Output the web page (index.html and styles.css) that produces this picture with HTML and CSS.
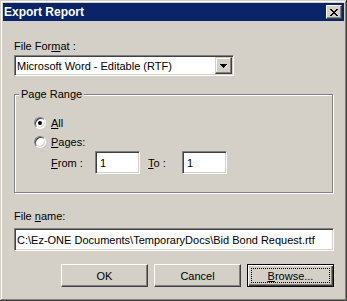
FILE: index.html
```html
<!DOCTYPE html>
<html lang="en">
<head>
    <meta charset="UTF-8">
    <title>Export Report</title>
    <link rel="stylesheet" href="styles.css">
</head>
<body>
    <div class="window">
        <div class="titlebar">
            <span class="title">Export Report</span>
            <button class="close-btn" type="button">
                <svg width="8" height="7" viewBox="0 0 8 7" shape-rendering="crispEdges">
                    <path d="M0 0h2v1H0zM6 0h2v1H6zM1 1h2v1H1zM5 1h2v1H5zM2 2h4v1H2zM3 3h2v1H3zM2 4h4v1H2zM1 5h2v1H1zM5 5h2v1H5zM0 6h2v1H0zM6 6h2v1H6z" fill="#000"/>
                </svg>
            </button>
        </div>
        <div class="dialog-body">
            <label class="label label-format">File For<u>m</u>at :</label>
            <div class="combo">
                <span class="combo-text">Microsoft Word - Editable (RTF)</span>
                <span class="combo-btn">
                    <svg width="7" height="4" viewBox="0 0 7 4" shape-rendering="crispEdges">
                        <path d="M0 0h7v1H0zM1 1h5v1H1zM2 2h3v1H2zM3 3h1v1H3z" fill="#000"/>
                    </svg>
                </span>
            </div>
            <fieldset class="group">
                <legend>Page Range</legend>
                <div class="option"><span class="radio checked"></span><span><u>A</u>ll</span></div>
                <div class="option"><span class="radio"></span><span><u>P</u>ages:</span></div>
                <div class="range">
                    <span class="range-label from-label"><u>F</u>rom :</span>
                    <div class="field field-small">1</div>
                    <span class="range-label to-label"><u>T</u>o :</span>
                    <div class="field field-small">1</div>
                </div>
            </fieldset>
            <label class="label label-name">File <u>n</u>ame:</label>
            <div class="field field-path">C:\Ez-ONE Documents\TemporaryDocs\Bid Bond Request.rtf</div>
            <div class="actions">
                <button class="btn" type="button">OK</button>
                <button class="btn" type="button">Cancel</button>
                <button class="btn btn-default" type="button"><span class="focus"><u>B</u>rowse...</span></button>
            </div>
        </div>
    </div>
</body>
</html>
```

FILE: styles.css
```css
* {
    box-sizing: border-box;
}
body {
    margin: 0;
    background-color: #d4d0c8;
    font-family: "Liberation Sans", Arial, sans-serif;
    font-size: 11px;
    color: #000;
}
.window {
    width: 347px;
    height: 301px;
    padding: 3px;
    background-color: #d4d0c8;
    box-shadow: inset -1px -1px #404040, inset 1px 1px #d4d0c8, inset -2px -2px #808080, inset 2px 2px #fff;
}
.titlebar {
    height: 18px;
    display: flex;
    align-items: center;
    justify-content: space-between;
    padding: 0 2px 0 1px;
    background-color: #0a246a;
    color: #fff;
}
.title {
    font-weight: bold;
    font-size: 12px;
}
.close-btn {
    width: 16px;
    height: 14px;
    padding: 0;
    display: flex;
    align-items: center;
    justify-content: center;
    background-color: #d4d0c8;
    border: 1px solid;
    border-color: #fff #404040 #404040 #fff;
    box-shadow: inset -1px -1px #808080, inset 1px 1px #d4d0c8;
}
.dialog-body {
    padding: 19px 10px 0 11px;
}
.label {
    display: block;
    line-height: 13px;
}
.label-format {
    margin-bottom: 2px;
}
.label-name {
    margin: 17px 0 5px;
}
.combo {
    width: 220px;
    height: 21px;
    display: flex;
    align-items: center;
    padding: 1px;
    background-color: #fff;
    border: 1px solid;
    border-color: #808080 #fff #fff #808080;
    box-shadow: inset 1px 1px #404040, inset -1px -1px #d4d0c8;
}
.combo-text {
    flex: 1;
    padding-left: 1px;
}
.combo-btn {
    width: 17px;
    height: 17px;
    display: flex;
    align-items: center;
    justify-content: center;
    background-color: #d4d0c8;
    border: 1px solid;
    border-color: #d4d0c8 #404040 #404040 #d4d0c8;
    box-shadow: inset -1px -1px #808080, inset 1px 1px #fff;
}
.group {
    width: 319px;
    margin: 12px 0 0;
    padding: 12px 0 18px;
    border: 1px solid #808080;
    box-shadow: 1px 1px #fff, inset 1px 1px #fff;
}
.group legend {
    margin-left: 4px;
    padding: 0 2px;
    line-height: 13px;
    background-color: #d4d0c8;
}
.option {
    height: 19px;
    display: flex;
    align-items: center;
    gap: 5px;
    padding-left: 19px;
}
.radio {
    position: relative;
    width: 12px;
    height: 12px;
    border-radius: 50%;
    background-color: #fff;
    border: 1px solid;
    border-color: #808080 #fff #fff #808080;
    box-shadow: inset 1px 1px #404040, inset -1px -1px #d4d0c8;
}
.radio.checked::after {
    content: "";
    position: absolute;
    left: 3px;
    top: 3px;
    width: 4px;
    height: 4px;
    border-radius: 50%;
    background-color: #000;
}
.range {
    display: flex;
    align-items: center;
    padding-left: 36px;
}
.from-label {
    width: 44px;
}
.to-label {
    width: 34px;
    margin-left: 8px;
}
.field {
    height: 23px;
    display: flex;
    align-items: center;
    padding: 0 2px;
    background-color: #fff;
    border: 1px solid;
    border-color: #808080 #fff #fff #808080;
    box-shadow: inset 1px 1px #404040, inset -1px -1px #d4d0c8;
}
.field-small {
    width: 45px;
    padding-left: 4px;
}
.field-path {
    width: 100%;
}
.actions {
    display: flex;
    justify-content: flex-end;
    gap: 6px;
    margin-top: 13px;
}
.btn {
    width: 87px;
    height: 23px;
    padding: 0;
    font: inherit;
    color: #000;
    background-color: #d4d0c8;
    border: 1px solid;
    border-color: #fff #404040 #404040 #fff;
    box-shadow: inset -1px -1px #808080, inset 1px 1px #d4d0c8;
}
.btn-default {
    border-color: #000;
    box-shadow: inset 1px 1px #fff, inset -1px -1px #404040, inset -2px -2px #808080;
}
.focus {
    display: flex;
    align-items: center;
    justify-content: center;
    height: 15px;
    margin: 0 3px;
    border: 1px dotted #000;
}
```
